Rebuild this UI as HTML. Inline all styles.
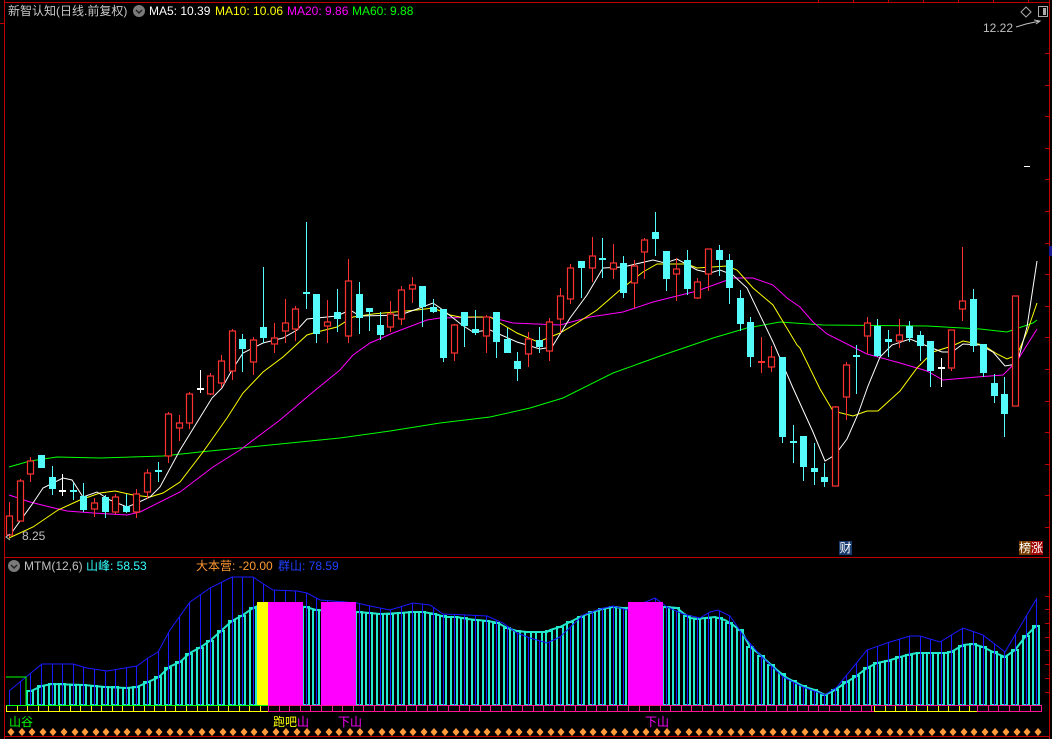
<!DOCTYPE html>
<html><head><meta charset="utf-8"><style>
html,body{margin:0;padding:0;background:#000;}
#w{position:relative;width:1052px;height:739px;overflow:hidden;background:#000;font-family:"Liberation Sans","Noto Sans CJK SC",sans-serif;font-size:12px;}
.t{position:absolute;white-space:nowrap;line-height:14px;}
svg{position:absolute;left:0;top:0;}
</style></head><body><div id="w">
<svg id="s" width="1052" height="739" viewBox="0 0 1052 739"></svg>
<div class="t" style="left:8px;top:4px;color:#c8c8c8">新智认知(日线.前复权)</div>
<div class="t" style="left:149px;top:4px;color:#fff">MA5: 10.39</div>
<div class="t" style="left:215px;top:4px;color:#ffff00">MA10: 10.06</div>
<div class="t" style="left:287px;top:4px;color:#ff00ff">MA20: 9.86</div>
<div class="t" style="left:352px;top:4px;color:#00ff00">MA60: 9.88</div>
<div class="t" style="left:983px;top:21px;color:#c0c0c0">12.22</div>
<div class="t" style="left:22px;top:529px;color:#c0c0c0">8.25</div>
<div class="t" style="left:839px;top:541px;width:13px;height:14px;background:#1a3c70;color:#fff;text-align:center">财</div>
<div class="t" style="left:1019px;top:541px;width:12px;height:14px;background:#7a3e00;color:#fff">榜</div>
<div class="t" style="left:1031px;top:541px;width:12px;height:14px;background:#a00000;color:#fff">涨</div>
<div class="t" style="left:24px;top:559px;color:#c0c0c0">MTM(12,6)</div>
<div class="t" style="left:86px;top:559px;color:#33ffff">山峰: 58.53</div>
<div class="t" style="left:196px;top:559px;color:#ff9933">大本营: -20.00</div>
<div class="t" style="left:278px;top:559px;color:#2040ff">群山: 78.59</div>
<div class="t" style="left:9px;top:715px;color:#00ff00">山谷</div>
<div class="t" style="left:273px;top:715px;color:#ffff00">跑吧<span style="color:#ff00ff">山</span></div>
<div class="t" style="left:338px;top:715px;color:#ff00ff">下山</div>
<div class="t" style="left:645px;top:715px;color:#ff00ff">下山</div>
<script>
var S=document.getElementById('s'),h='';
function L(x1,y1,x2,y2,c,w){h+='<line x1="'+x1+'" y1="'+y1+'" x2="'+x2+'" y2="'+y2+'" stroke="'+c+'" stroke-width="'+(w||1)+'"/>';}
function R(x,y,w,hh,f,s,sw){h+='<rect x="'+x+'" y="'+y+'" width="'+w+'" height="'+hh+'" fill="'+f+'"'+(s?' stroke="'+s+'" stroke-width="'+(sw||1)+'"':'')+'/>';}
function P(pts,c,w){h+='<polyline fill="none" stroke="'+c+'" stroke-width="'+(w||1)+'" points="'+pts.map(function(p){return p.join(',')}).join(' ')+'"/>';}
function I(pts,x){if(x<=pts[0][0])return pts[0][1];for(var k=1;k<pts.length;k++){if(x<=pts[k][0]){var a=pts[k-1],b=pts[k];return a[1]+(b[1]-a[1])*(x-a[0])/(b[0]-a[0]);}}return pts[pts.length-1][1];}
var RED='#c00000';
// frame
L(4.5,0,4.5,739,RED);L(1049.5,0,1049.5,739,RED);L(4,2.5,1050,2.5,RED);L(4,557.5,1050,557.5,RED);L(4,736.5,1050,736.5,RED);L(0,23.5,4,23.5,RED);
[818,853,888,923,958,993,1028].forEach(function(x){L(x+.5,0,x+.5,2,RED);});
for(var y=53;y<540;y+=31.6)L(1045,Math.round(y)+.5,1049,Math.round(y)+.5,RED);
[596,609,623,637,650,664,678,692].forEach(function(y){L(1045,y+.5,1049,y+.5,RED);});
R(1049,246,3,10,'#1a1a90');
// MA lines
P([[9,467],[30,461],[57,457],[100,458],[163,456],[200,452],[250,447],[290,443],[340,438],[390,431],[440,423],[490,417],[530,408],[563,398],[613,373],[663,355],[713,338],[747,328],[780,322],[823,325],[927,326],[980,329],[1007,332],[1033,323],[1037,320]],'#00ff00');
P([[9,495],[30,502],[50,507],[67,511],[93,513],[127,515],[140,512],[180,492],[213,467],[240,450],[280,420],[313,392],[340,370],[353,355],[370,343],[393,333],[427,320],[440,318],[490,317],[513,323],[560,325],[590,317],[623,312],[653,302],[697,291],[733,278],[753,278],[773,285],[787,298],[800,307],[813,322],[827,334],[867,354],[900,363],[927,371],[943,380],[977,377],[1003,375],[1017,361],[1037,329]],'#ff00ff');
P([[9,538],[33,527],[58,510],[80,500],[100,493],[115,491],[133,495],[150,497],[163,493],[180,482],[203,452],[227,418],[243,393],[263,372],[283,357],[307,335],[317,332],[337,327],[353,317],[373,314],[417,310],[433,308],[450,315],[460,317],[490,317],[500,323],[517,333],[538,342],[560,333],[577,323],[597,310],[620,290],[643,272],[657,264],[687,264],[697,268],[727,266],[737,270],[753,288],[773,305],[797,345],[800,348],[820,389],[833,411],[853,416],[867,411],[878,411],[900,391],[917,368],[933,352],[952,346],[963,341],[983,345],[997,354],[1007,359],[1017,355],[1027,332],[1037,303]],'#ffff00');
P([[10,535],[33,503],[43,488],[63,478],[72,480],[83,497],[97,492],[110,500],[127,507],[137,503],[150,497],[160,487],[180,450],[212,398],[222,388],[232,370],[243,353],[263,343],[283,338],[297,330],[307,319],[337,316],[350,310],[360,316],[400,315],[417,309],[433,303],[443,310],[462,325],[473,332],[490,330],[517,342],[540,349],[552,347],[570,318],[587,295],[603,268],[623,267],[653,260],[665,263],[677,259],[697,270],[710,273],[720,270],[733,275],[747,288],[773,342],[793,388],[813,432],[825,461],[835,455],[847,439],[858,414],[868,386],[880,357],[892,345],[910,339],[927,346],[942,352],[952,352],[963,344],[980,345],[993,352],[1005,366],[1017,364],[1027,327],[1037,261]],'#ffffff');
// candles
var C=[[516,535,502,537,'r'],[481,521,479,521,'r'],[461,474,457,482,'r'],[455,468,455,468,'c'],[477,489,466,495,'c'],[491,491,474,496,'w'],[491,491,483,500,'c'],[496,510,483,512,'c'],[503,509,498,517,'r'],[497,512,495,518,'c'],[497,512,494,514,'r'],[506,512,494,513,'c'],[494,512,489,518,'r'],[473,492,469,499,'r'],[471,471,462,482,'c'],[414,456,412,463,'r'],[423,428,415,441,'r'],[394,423,392,429,'r'],[389,389,370,393,'w'],[376,394,373,395,'r'],[361,383,355,388,'r'],[331,371,329,380,'r'],[339,349,334,372,'c'],[340,362,337,375,'r'],[327,338,267,343,'c'],[338,344,323,353,'r'],[323,331,299,343,'r'],[309,329,306,341,'r'],[293,293,222,309,'c'],[294,334,294,343,'c'],[322,326,300,343,'r'],[312,319,289,332,'c'],[281,336,259,343,'r'],[294,318,282,334,'c'],[308,312,308,331,'c'],[325,335,312,340,'c'],[314,327,301,332,'r'],[290,319,286,325,'r'],[285,289,277,303,'r'],[286,307,286,327,'c'],[307,312,299,313,'c'],[309,358,309,362,'c'],[325,353,324,361,'r'],[312,326,312,347,'c'],[329,333,310,335,'c'],[317,336,315,353,'r'],[312,342,312,358,'c'],[339,353,328,353,'c'],[361,369,352,381,'c'],[339,354,332,367,'r'],[340,347,327,353,'c'],[322,351,318,361,'r'],[296,319,288,333,'r'],[268,299,264,304,'r'],[261,268,261,298,'c'],[256,268,237,282,'r'],[259,259,238,278,'c'],[263,269,244,279,'r'],[263,293,256,298,'c'],[266,283,260,308,'r'],[240,252,238,279,'r'],[232,239,212,256,'c'],[251,279,251,291,'c'],[269,274,258,301,'r'],[260,289,250,295,'c'],[282,298,278,299,'r'],[249,274,249,291,'r'],[250,260,245,276,'c'],[260,288,254,304,'c'],[298,324,290,331,'c'],[322,357,317,367,'c'],[362,362,337,373,'r'],[357,367,346,372,'r'],[357,437,357,443,'c'],[442,442,425,463,'c'],[436,467,436,481,'c'],[468,472,443,485,'c'],[477,482,463,487,'c'],[407,486,406,486,'r'],[365,397,362,420,'r'],[356,356,345,394,'c'],[323,336,317,354,'r'],[326,356,319,357,'c'],[339,342,330,357,'c'],[335,341,319,348,'r'],[326,338,321,342,'c'],[335,346,331,361,'c'],[341,371,341,387,'c'],[368,368,358,387,'w'],[330,368,330,371,'r'],[301,309,247,321,'r'],[299,346,289,352,'c'],[344,373,344,377,'c'],[383,396,374,403,'c'],[394,414,377,437,'c'],[296,406,296,406,'r']];
C.forEach(function(c,i){var x=Math.round(9.3+10.586*i)+.5;var t=c[0],b=c[1],col=c[4]=='r'?'#ff3232':(c[4]=='c'?'#54fcfc':'#ffffff');
 if(b-t<2){L(x,c[2],x,c[3],col);L(x-3.5,t,x+3.5,t,col,2);}
 else if(c[4]=='r'){L(x,c[2],x,t,col);L(x,b,x,c[3],col);R(x-3,t,6,b-t,'#000',col,1.2);}
 else{L(x,c[2],x,c[3],col);R(x-3.5,t,7,b-t,col);}
});
L(1024,166.5,1030,166.5,'#fff');
h+='<path d="M1016 27 L1026 24 L1040 21 M1034 20 L1040 21 L1036 24" stroke="#c0c0c0" fill="none"/>';
h+='<path d="M1021 12 L1026 7 L1031 12 L1026 17Z" stroke="#aaa" fill="none"/>';
R(1038.5,6.5,9,10,'none','#aaa');R(1043,8,3,7,'#aaa');
h+='<path d="M10 534 l-4 3 l4 3" stroke="#c0c0c0" fill="none"/>';
// MTM
var CY=[[31,691],[42,686],[52,684],[84,685],[105,687],[127,688],[137,687],[148,682],[159,677],[169,667],[180,662],[190,653],[201,647],[211,640],[222,630],[232,621],[243,615],[253,608],[262,604],[306,607],[316,610],[357,612],[370,613],[380,614],[400,613],[413,612],[423,612],[435,614],[445,617],[457,617],[467,619],[477,620],[488,621],[498,623],[507,628],[517,631],[527,632],[547,632],[550,630],[560,627],[570,622],[580,617],[590,613],[602,609],[613,607],[623,608],[667,607],[677,608],[683,613],[690,618],[698,619],[705,618],[715,617],[725,620],[733,625],[742,632],[750,647],[758,653],[768,662],[777,670],[787,678],[797,683],[805,687],[815,690],[825,695],[835,690],[845,683],[855,677],[867,668],[877,663],[887,661],[897,658],[907,655],[917,653],[947,653],[953,651],[963,645],[973,644],[983,647],[993,652],[1005,657],[1015,650],[1025,637],[1037,625]];
var BL=[[9,691],[26,677],[42,664],[73,664],[87,668],[107,671],[137,666],[148,658],[158,652],[170,630],[190,602],[210,588],[232,577],[253,577],[265,585],[273,590],[297,591],[307,593],[320,600],[357,603],[370,606],[390,610],[400,607],[413,603],[430,605],[443,614],[467,615],[487,616],[503,623],[517,633],[530,638],[547,643],[560,637],[583,615],[600,609],[613,606],[627,610],[655,598],[667,607],[683,614],[700,618],[710,612],[718,610],[730,616],[743,635],[760,655],[783,677],[803,687],[825,695],[837,687],[867,650],[890,642],[910,636],[920,636],[940,642],[963,628],[983,635],[1005,652],[1037,598]];
var TC='#22e8cc';
for(var i=2;i<98;i++){var x=Math.round(9.3+10.586*i);var t=Math.round(I(CY,x));R(x-3,t,6,705-t,'none',TC,2);}
P(CY,TC,2);
for(var i=0;i<98;i++){var x=Math.round(9.3+10.586*i)+.5;L(x,705,x,Math.round(I(BL,x)),'#1a1aff');}
P(BL,'#1a1aff');
P([[6,677],[26,677],[26,705]],'#00ff00');
R(257,602,11,103,'#ffff00');R(268,602,35,103,'#ff00ff');R(321,602,35,103,'#ff00ff');R(628,602,35,103,'#ff00ff');
// strip
L(6,705.5,268,705.5,'#00ff00');
function strip(a,b,c){L(a,711.5,b,711.5,c);for(var x=a;x<=b;x+=10.586)L(Math.round(x)+.5,706,Math.round(x)+.5,712,c);}
L(268,705.5,1042,705.5,'#ff1493');
strip(6,268,'#ffff00');strip(268,874,'#ff1493');strip(874,977,'#ffff00');strip(977,1042,'#ff1493');
for(var x=11;x<1045;x+=10.586){var cx=Math.round(x);h+='<path d="M'+cx+' 728 L'+(cx+3.5)+' 732 L'+cx+' 736 L'+(cx-3.5)+' 732Z" fill="#ff9a3a"/>';}
// icons
h+='<circle cx="139" cy="11" r="6" fill="#7a7a7a"/><path d="M136 10 l3 3 l3 -3" stroke="#222" stroke-width="1.5" fill="none"/>';
h+='<circle cx="14" cy="566" r="6" fill="#7a7a7a"/><path d="M11 565 l3 3 l3 -3" stroke="#222" stroke-width="1.5" fill="none"/>';
S.innerHTML=h;
</script>
</div></body></html>
